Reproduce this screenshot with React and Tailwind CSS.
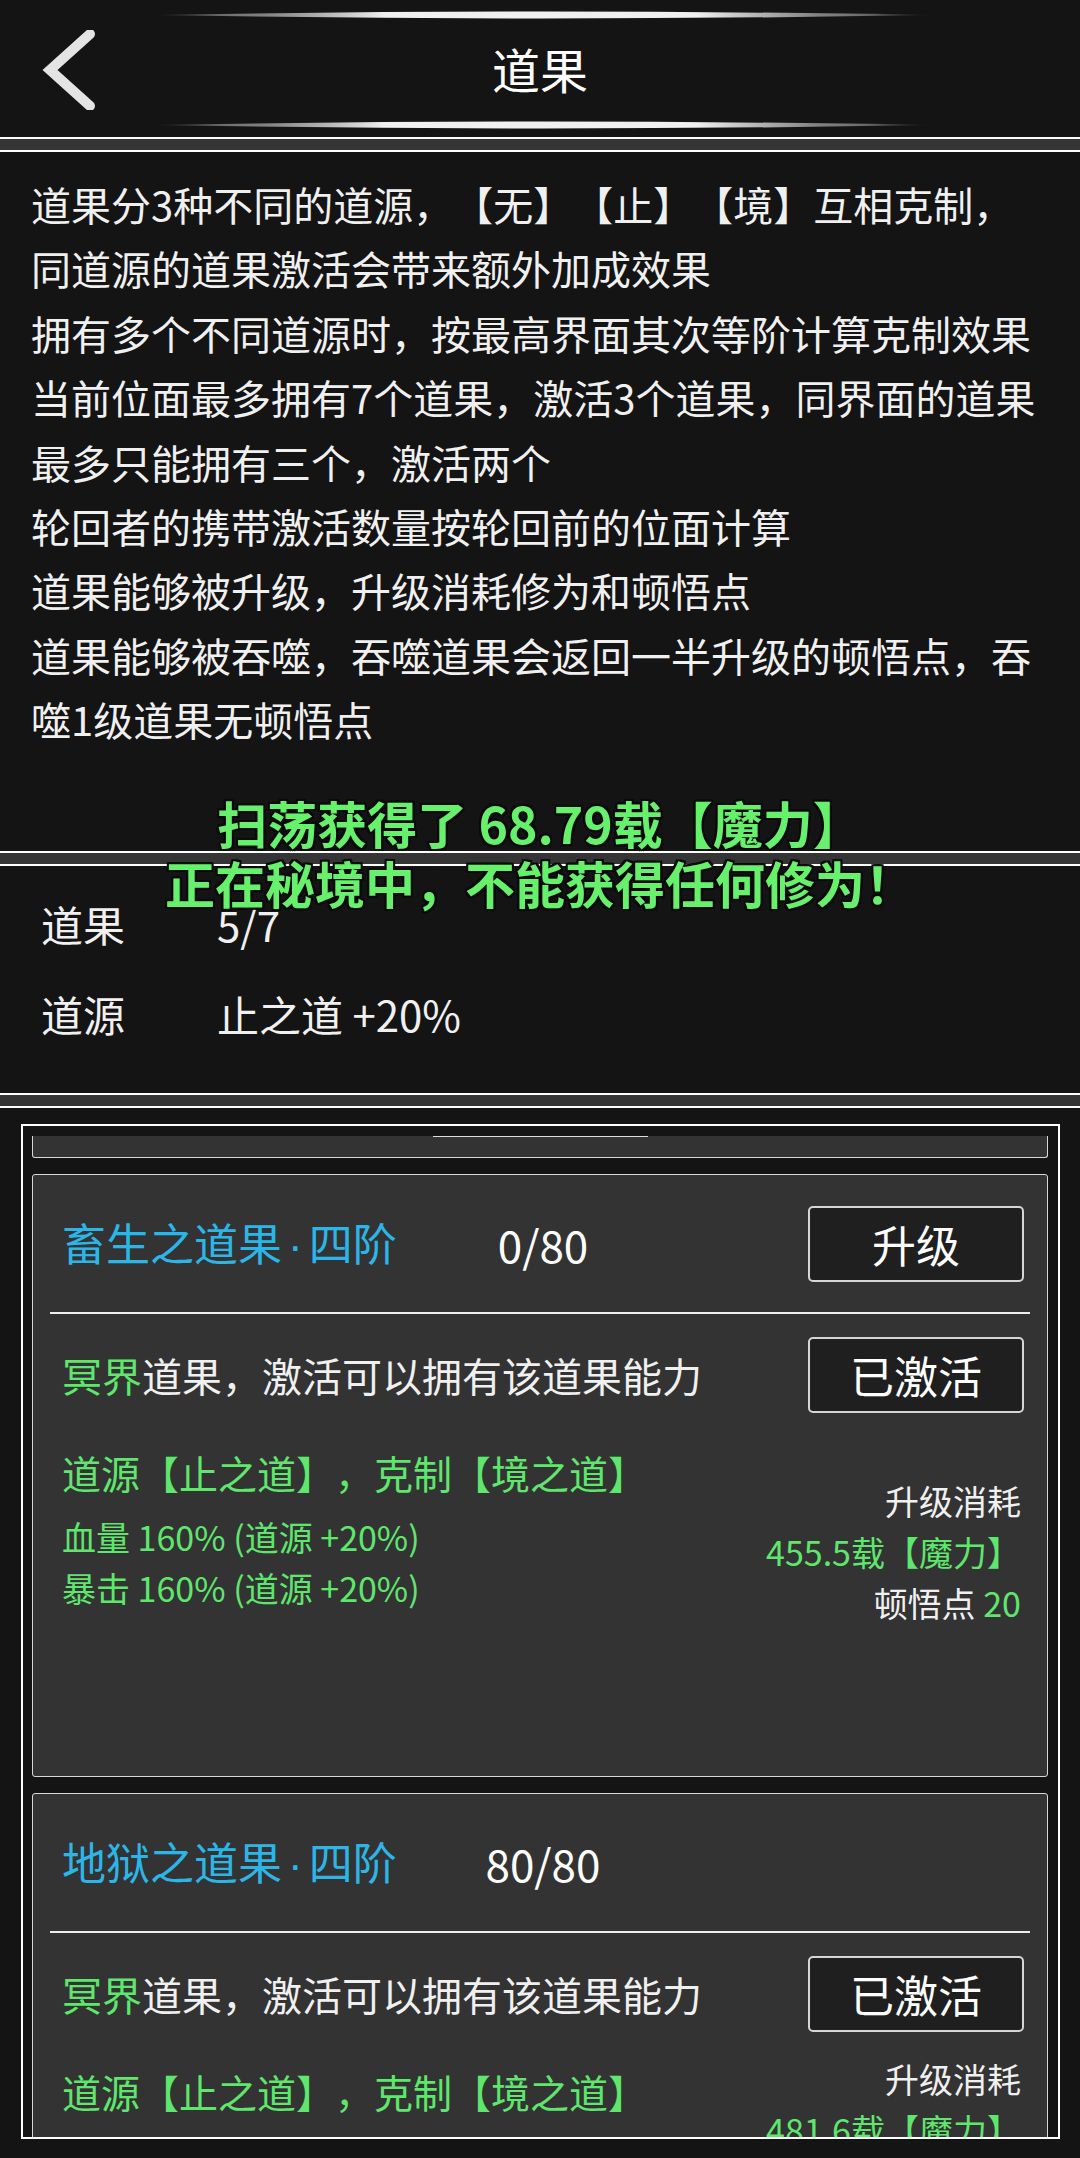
import React from "react";

const GREEN = "text-[#5fe66d]";

function Glow({ id }) {
  return (
    <svg width="1080" height="12" viewBox="0 0 1080 12" className="block">
      <defs>
        <linearGradient id={id} x1="152" x2="931" y1="0" y2="0" gradientUnits="userSpaceOnUse">
          <stop offset="0" stopColor="#ffffff" stopOpacity="0" />
          <stop offset="0.14" stopColor="#9a9a9a" stopOpacity="0.8" />
          <stop offset="0.3" stopColor="#f0f0f0" />
          <stop offset="0.7" stopColor="#f0f0f0" />
          <stop offset="0.86" stopColor="#9a9a9a" stopOpacity="0.8" />
          <stop offset="1" stopColor="#ffffff" stopOpacity="0" />
        </linearGradient>
      </defs>
      <path d="M152 6 Q541 -1 931 6 Q541 13 152 6 Z" fill={`url(#${id})`} />
    </svg>
  );
}

function Separator() {
  return <div className="h-[15px] border-y-2 border-white bg-[#353535]" />;
}

function Btn({ children }) {
  return (
    <div className="flex h-[76px] w-[216px] items-center justify-center rounded-[5px] border-2 border-[#d6d6d6] bg-[#1f1f1f] text-[44px] leading-none text-white">
      {children}
    </div>
  );
}

function Card({ name, count, upgrade, cost, rightTop }) {
  return (
    <div className="h-[603px] shrink-0 overflow-hidden rounded-[3px] border border-[#d8d8d8] bg-[#333333]">
      <div className="grid h-[137px] grid-cols-[1fr_auto_1fr] items-center pl-[29px] pr-[23px]">
        <div className="whitespace-nowrap text-[44px] text-[#2cb6e8]">
          {name}
          <span className="mx-[6px] font-['Liberation_Sans',sans-serif]">·</span>
          四阶
        </div>
        <div className="text-[44px] text-white">{count}</div>
        <div className="flex justify-end">{upgrade && <Btn>升级</Btn>}</div>
      </div>
      <div className="mx-[17px] h-[2px] bg-[#eeeeee]" />
      <div className="flex items-center justify-between pl-[29px] pr-[23px] pt-[23px]">
        <div className="whitespace-nowrap text-[40px] leading-[76px] text-[#f0f0f0]">
          <span className={GREEN}>冥界</span>道果，激活可以拥有该道果能力
        </div>
        <Btn>已激活</Btn>
      </div>
      <div className="mt-[27px] flex justify-between pl-[29px] pr-[26px]">
        <div className={GREEN}>
          <div className="whitespace-nowrap text-[39px] leading-[64px]">道源【止之道】，克制【境之道】</div>
          <div className="mt-[7px] whitespace-nowrap text-[34px] leading-[51px]">血量 160% (道源 +20%)</div>
          <div className="whitespace-nowrap text-[34px] leading-[51px]">暴击 160% (道源 +20%)</div>
        </div>
        <div className={`${rightTop} text-right text-[34px] leading-[51px]`}>
          <div className="text-[#f0f0f0]">升级消耗</div>
          <div className={GREEN}>{cost}载【魔力】</div>
          <div className="text-[#f0f0f0]">
            顿悟点 <span className={GREEN}>20</span>
          </div>
        </div>
      </div>
    </div>
  );
}

const INFO = [
  "道果分3种不同的道源，【无】【止】【境】互相克制，",
  "同道源的道果激活会带来额外加成效果",
  "拥有多个不同道源时，按最高界面其次等阶计算克制效果",
  "当前位面最多拥有7个道果，激活3个道果，同界面的道果",
  "最多只能拥有三个，激活两个",
  "轮回者的携带激活数量按轮回前的位面计算",
  "道果能够被升级，升级消耗修为和顿悟点",
  "道果能够被吞噬，吞噬道果会返回一半升级的顿悟点，吞",
  "噬1级道果无顿悟点",
];

export default function App() {
  return (
    <div className="relative h-[2158px] w-[1080px] overflow-hidden bg-[#141414] font-['Noto_Sans_CJK_SC','Noto_Sans',sans-serif] [text-spacing-trim:space-all]">
      {/* Header */}
      <div className="flex h-[137px] flex-col bg-[#141414] pt-[9px]">
        <Glow id="g1" />
        <div className="grid flex-1 grid-cols-[1fr_auto_1fr] items-center">
          <div className="pl-[40px]">
            <svg width="60" height="80" viewBox="0 0 60 80" className="block">
              <polyline
                points="50,4 10,40 50,76"
                fill="none"
                stroke="#e4e4e4"
                strokeWidth="10"
                strokeLinecap="round"
                strokeLinejoin="miter"
              />
            </svg>
          </div>
          <div className="pb-[4px] text-[48px] leading-none text-white">道果</div>
          <div />
        </div>
        <div className="pb-[6px]">
          <Glow id="g2" />
        </div>
      </div>
      <Separator />

      {/* Info */}
      <div className="h-[699px] bg-[#141414] pl-[31px] pt-[20px] text-[40px] leading-[64.4px] text-[#f0f0f0]">
        {INFO.map((l, i) => (
          <div key={i} className="whitespace-nowrap">
            {l}
          </div>
        ))}
      </div>
      <Separator />

      {/* Stats */}
      <div className="h-[227px] bg-[#141414] pt-[12px] text-[42px] text-[#f0f0f0]">
        <div className="flex h-[90px] items-center">
          <div className="w-[217px] pl-[41px]">道果</div>
          <div>5/7</div>
        </div>
        <div className="flex h-[90px] items-center">
          <div className="w-[217px] pl-[41px]">道源</div>
          <div>止之道 +20%</div>
        </div>
      </div>
      <Separator />

      {/* List */}
      <div className="h-[1050px] bg-[#141414] pt-[16px]">
        <div className="ml-[21px] mr-[20px] h-[1015px] border-2 border-white">
          <div className="mt-[10px] flex h-[1001px] flex-col gap-[16px] overflow-hidden pl-[9px] pr-[10px]">
            <div className="flex h-[22px] shrink-0 justify-center rounded-b-[3px] border-x border-b border-[#d8d8d8] bg-[#333333]">
              <div className="h-px w-[215px] bg-[#dddddd]" />
            </div>
            <Card name="畜生之道果" count="0/80" upgrade cost="455.5" rightTop="mt-[35px]" />
            <Card name="地狱之道果" count="80/80" cost="481.6" rightTop="-mt-[6px]" />
          </div>
        </div>
      </div>

      {/* Toast overlay */}
      <div className="pointer-events-none absolute left-0 right-0 top-[792px] text-center text-[50px] font-bold leading-[60px] text-[#66f06c] [text-shadow:2px_2px_0_#0a0a0a,-2px_-2px_0_#0a0a0a,2px_-2px_0_#0a0a0a,-2px_2px_0_#0a0a0a,0_2px_0_#0a0a0a,0_-2px_0_#0a0a0a,2px_0_0_#0a0a0a,-2px_0_0_#0a0a0a]">
        <div>扫荡获得了 68.79载【魔力】</div>
        <div>正在秘境中，不能获得任何修为！</div>
      </div>
    </div>
  );
}
